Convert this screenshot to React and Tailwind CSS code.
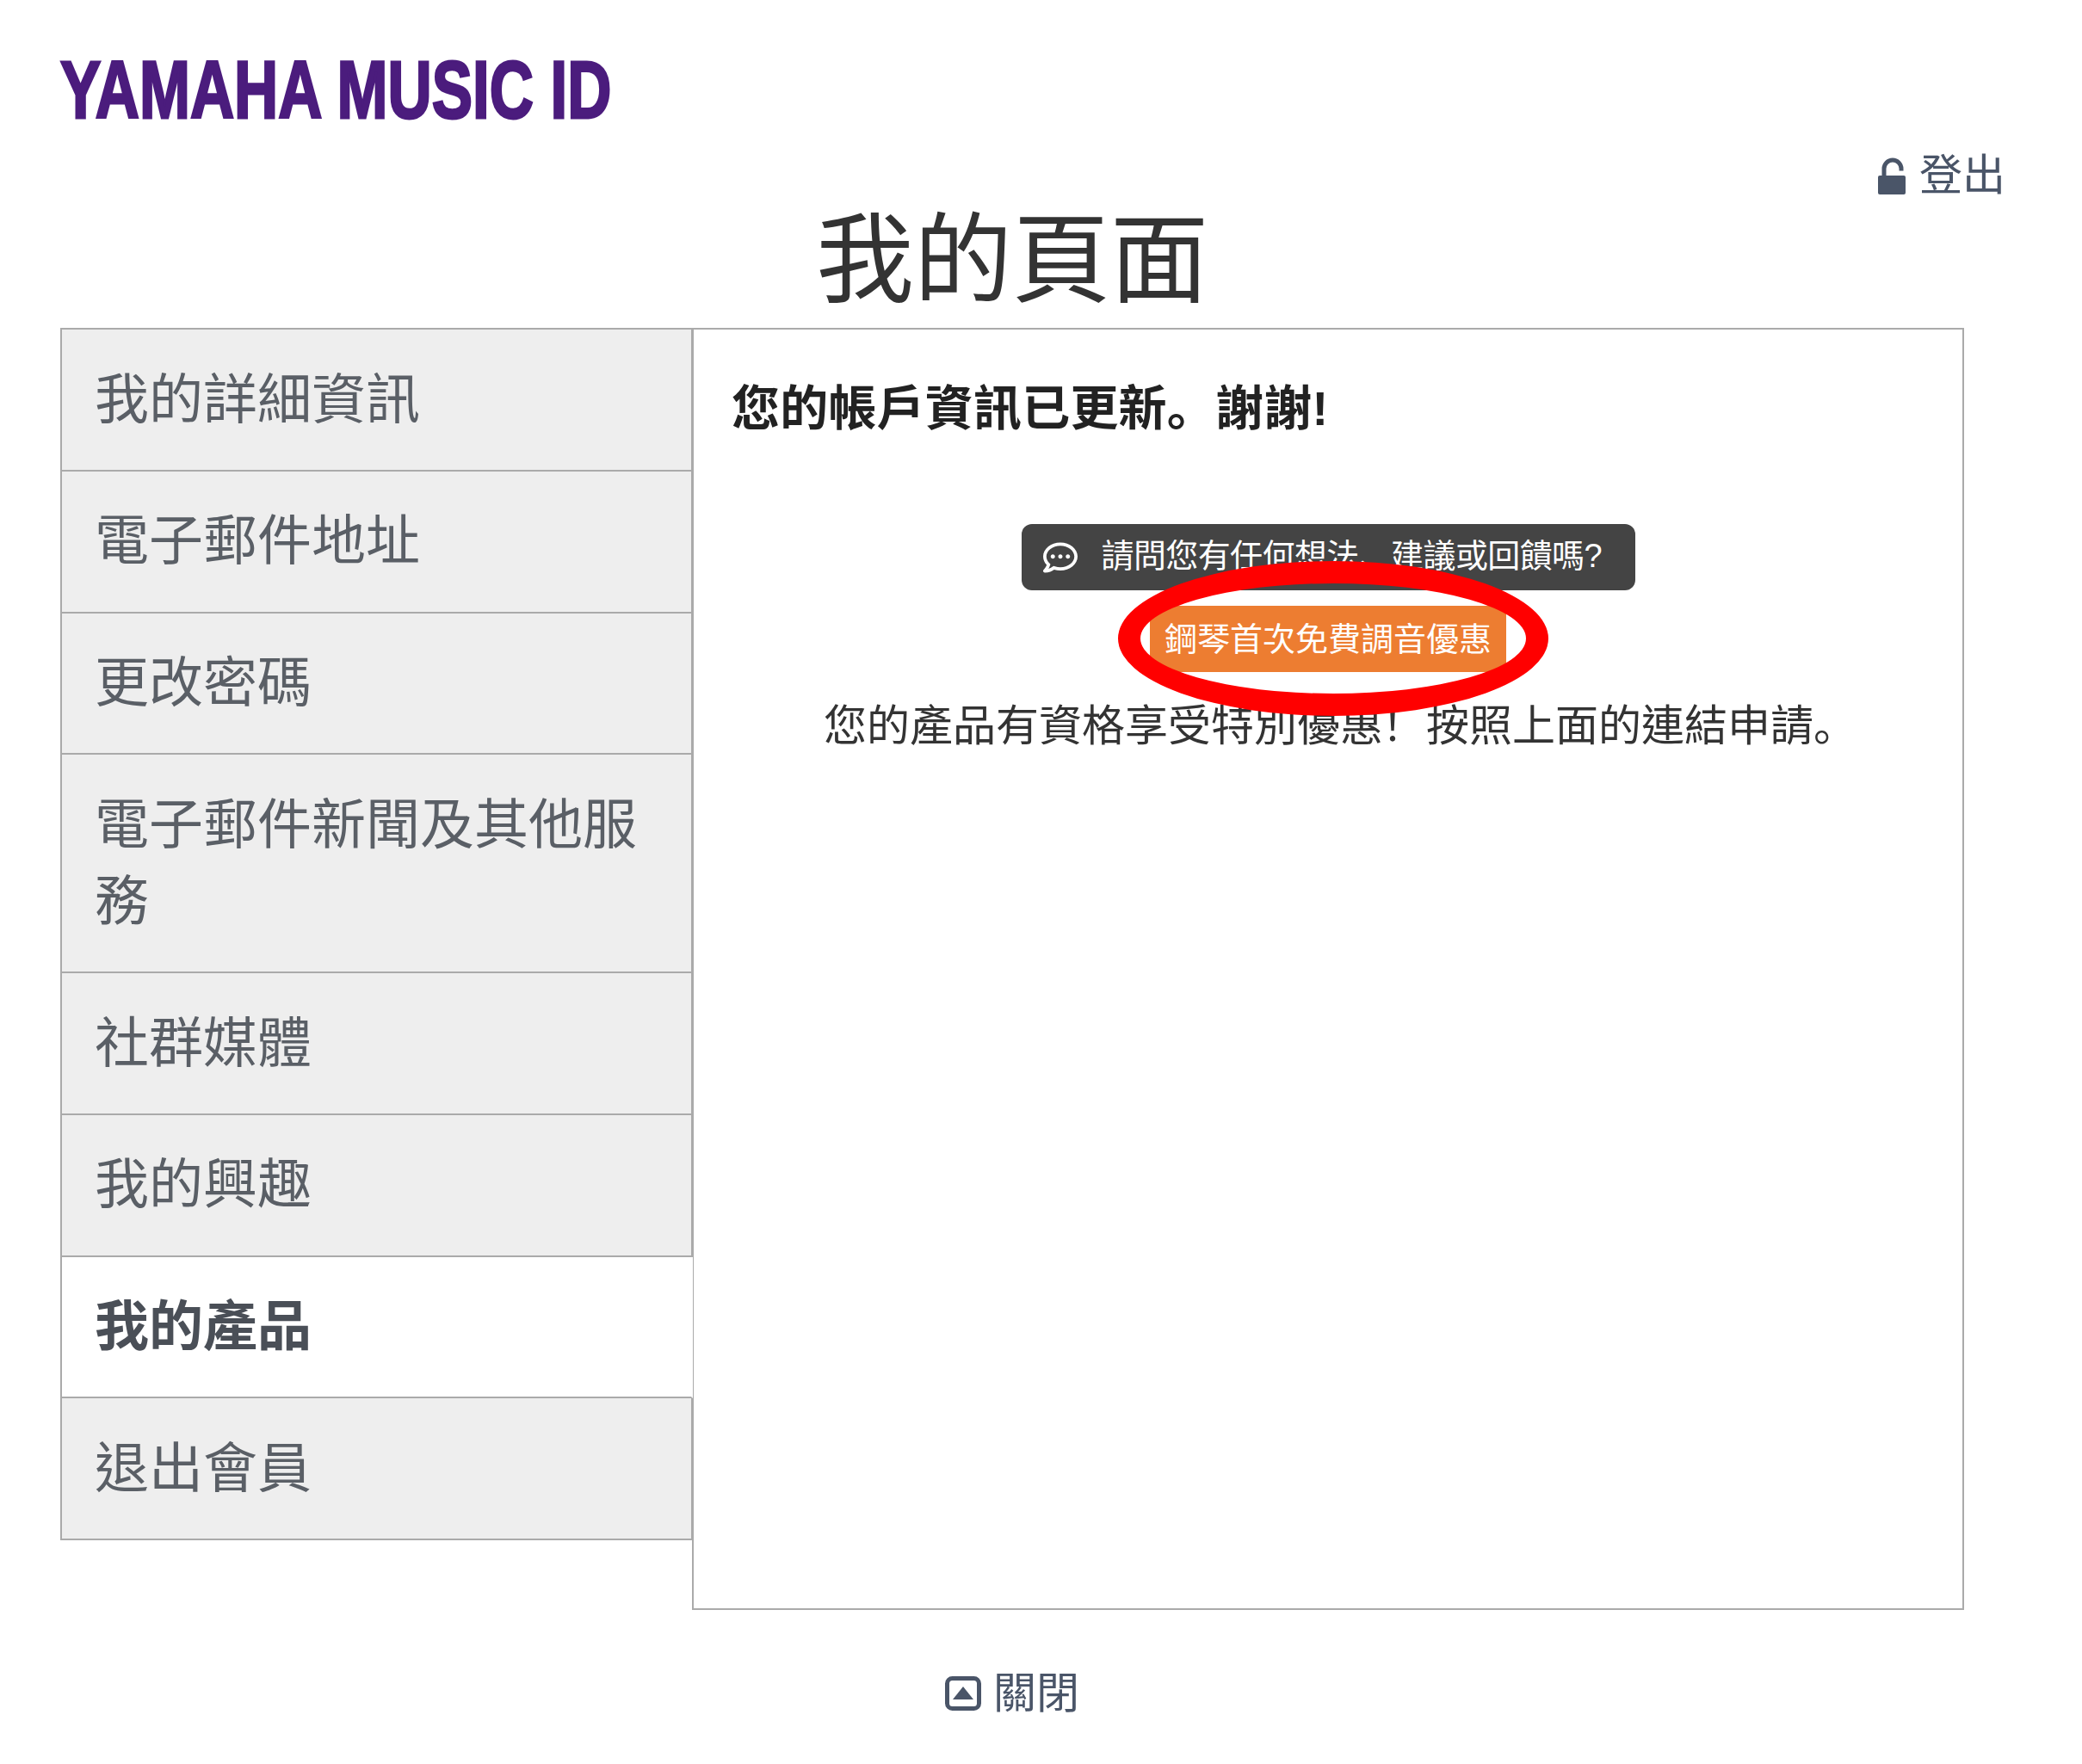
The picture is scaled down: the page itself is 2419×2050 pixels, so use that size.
import React from "react";
import { FaRegCommentDots } from "react-icons/fa";

const cjk = { fontFamily: '"Liberation Sans","Noto Sans CJK TC",sans-serif' };
const jp = { fontFamily: '"Noto Sans CJK JP",sans-serif' };

const items = [
  "我的詳細資訊",
  "電子郵件地址",
  "更改密碼",
  "電子郵件新聞及其他服務",
  "社群媒體",
  "我的興趣",
  "我的產品",
  "退出會員",
];

function LockIcon() {
  return (
    <svg viewBox="0 0 32 43" className="w-[32px] h-[43px] shrink-0" fill="currentColor">
      <rect x="0" y="21" width="32" height="22" rx="2" />
      <path d="M7 22 V13 A10 10 0 0 1 27 13 V15.5" fill="none" stroke="currentColor" strokeWidth="5" />
    </svg>
  );
}

function CollapseIcon() {
  return (
    <svg viewBox="0 0 42 40" className="w-[42px] h-[40px] shrink-0" fill="currentColor">
      <rect x="2.5" y="2.5" width="37" height="35" rx="6" fill="none" stroke="currentColor" strokeWidth="5" />
      <path d="M21 12 L33 27 H9 Z" />
    </svg>
  );
}

export default function App() {
  return (
    <div className="w-[2419px] h-[2050px] bg-white overflow-hidden text-[#333]" style={cjk}>
      <header className="h-[170px] pt-[54px] pl-[70px]">
        <div className="origin-left scale-x-[0.723] scale-y-[0.97] w-[900px] text-[98px] leading-[100px] font-bold text-[#4b1c7d] whitespace-nowrap [-webkit-text-stroke:3px_#4b1c7d]">
          YAMAHA MUSIC ID
        </div>
      </header>

      <div className="flex justify-end items-center h-[60px] pr-[89px] pt-[8px] text-[50px] leading-[60px] text-[#4a5568] gap-[16px]">
        <LockIcon />
        <span>登出</span>
      </div>

      <h1 className="w-[2352px] h-[151px] pt-[8px] text-center text-[114px] leading-[130px] font-normal text-[#333]">
        我的頁面
      </h1>

      <div className="ml-[70px] w-[2212px] flex items-start">
        <nav className="relative z-10 w-[735px] shrink-0 -mr-[1px] border-t-2 border-l-2 border-[#aaa]">
          {items.map((t, i) => {
            const active = i === 6;
            return (
              <div
                key={t}
                className={
                  "pl-[38px] pr-[40px] pt-[36.5px] pb-[37.25px] border-b-2 border-[#aaa] text-[63px] leading-[89px] " +
                  (active
                    ? "bg-white font-bold text-[#4a4f57] border-r-2 border-r-white"
                    : "bg-[#eeeeee] text-[#5a5f66] border-r-2 border-r-[#aaa]")
                }
              >
                {t}
              </div>
            );
          })}
        </nav>

        <main className="flex-1 h-[1490px] border-2 border-[#aaa] pt-[47px] px-[44px]">
          <p className="text-[56px] leading-[80px] font-bold text-[#222] tracking-[0.2px]">
            您的帳戶資訊已更新<span style={jp}>。</span>謝謝!
          </p>

          <div className="flex flex-col items-center mt-[94px]">
            <div className="relative flex flex-col items-center">
              <a className="flex items-center h-[77px] w-[713px] pl-[25px] rounded-[12px] bg-[#444] text-white text-[38px] leading-[48px] gap-[28px] tracking-[-0.6px]">
                <FaRegCommentDots className="w-[40px] h-[40px] shrink-0" />
                <span className="whitespace-nowrap pb-[6px]">
                  請問您有任何想法<span style={jp}>、</span>建議或回饋嗎?
                </span>
              </a>
              <a className="flex items-center justify-center mt-[18px] h-[77px] w-[414px] bg-[#ed7d31] text-white text-[38px] leading-[48px] whitespace-nowrap">
                鋼琴首次免費調音優惠
              </a>
              <div className="absolute left-[112px] top-[43px] w-[500px] h-[180px] rounded-[50%] border-[26px] border-[#ff0000] z-10" />
            </div>
            <p className="mt-[23px] pl-[28px] text-[50px] leading-[70px] text-[#333] whitespace-nowrap">
              您的產品有資格享受特別優惠
              <span style={jp} className="inline-block -translate-x-[14px]">！</span>
              按照上面的連結申請<span style={jp}>。</span>
            </p>
          </div>
        </main>
      </div>

      <div className="w-[2352px] flex justify-center items-center gap-[14px] mt-[67px] text-[50px] leading-[60px] text-[#4a5568]">
        <CollapseIcon />
        <span>關閉</span>
      </div>
    </div>
  );
}
